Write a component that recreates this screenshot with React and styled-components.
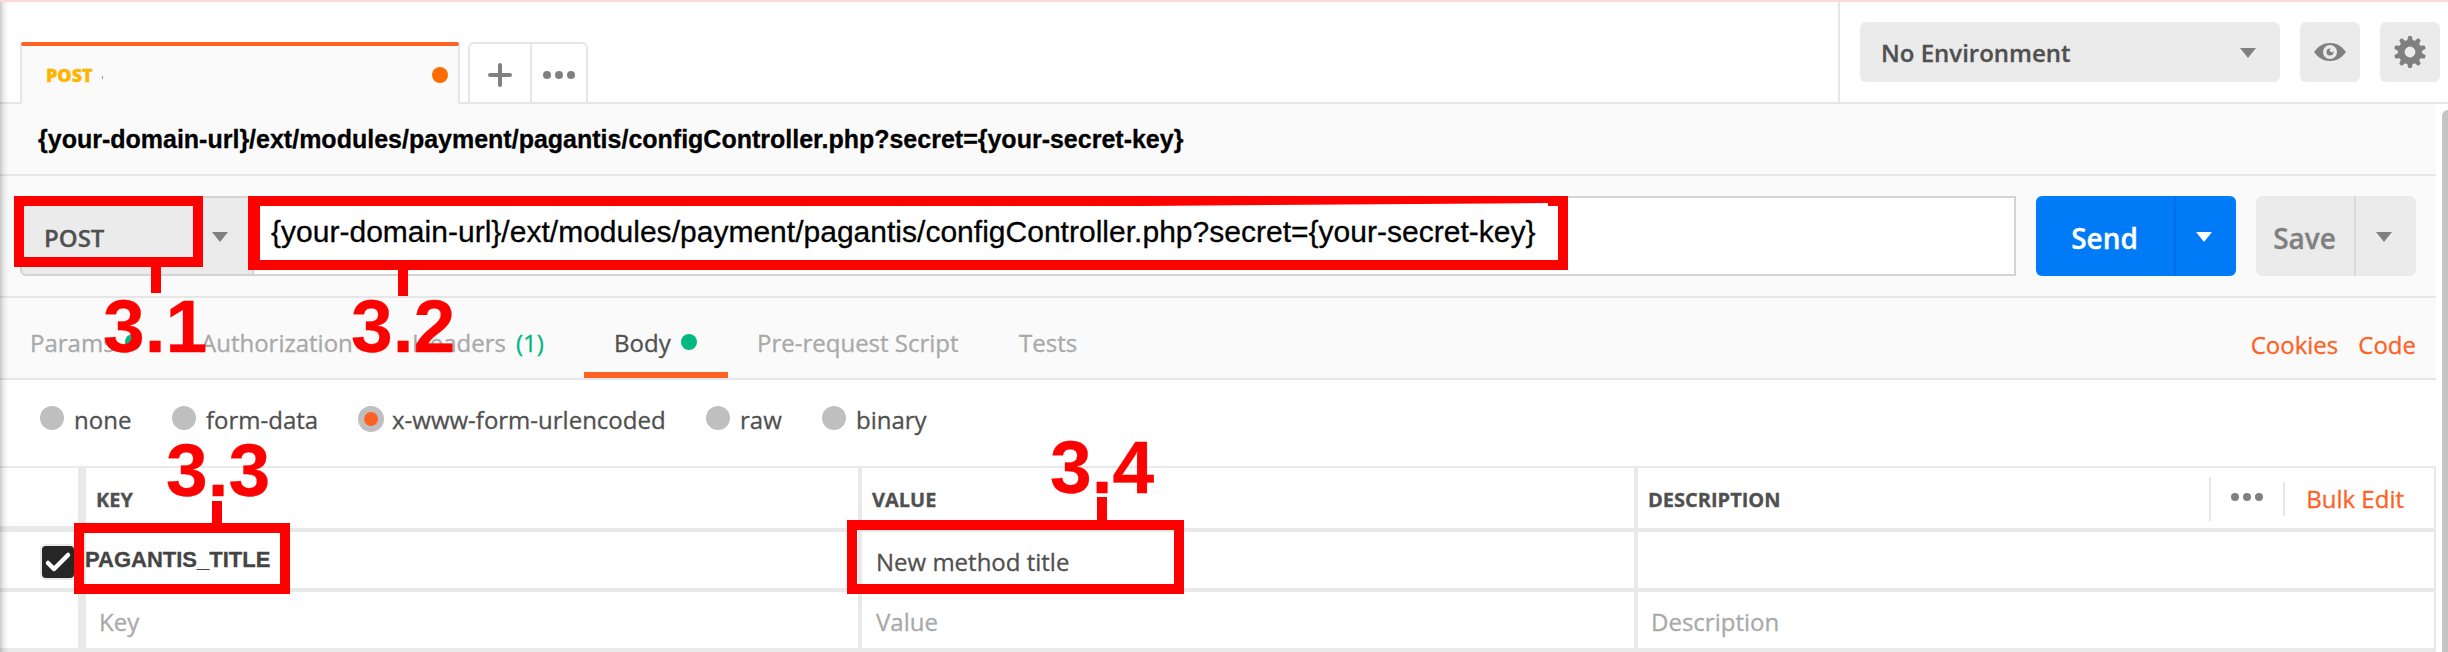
import React from "react";
import styled, { createGlobalStyle } from "styled-components";

const GlobalStyle = createGlobalStyle`
  * { box-sizing: border-box; }
  body { margin: 0; background: #fff; overflow: hidden; }
`;

const sans = `"Open Sans", "Noto Sans", sans-serif`;
const helv = `"Liberation Sans", Arial, sans-serif`;

const Window = styled.div`
  position: relative;
  width: 2448px;
  height: 652px;
  overflow: hidden;
  display: flex;
  flex-direction: column;
  border-top: 2px solid #ffd9d9;
  background: #fff;
  font-family: ${sans};
  font-size: 24px;
  color: #505050;
  white-space: nowrap;
  -webkit-text-stroke: 0.3px currentColor;
`;

const LeftShade = styled.div`
  position: absolute;
  left: 0;
  top: 0;
  width: 9px;
  height: 650px;
  background: linear-gradient(to right, rgba(0, 0, 0, 0.2), rgba(0, 0, 0, 0.06) 45%, rgba(0, 0, 0, 0));
`;

const Label = styled.span`
  display: block;
`;

/* ---- top bar ---- */
const TopBar = styled.header`
  display: flex;
  height: 102px;
  flex: none;
`;
const TabStrip = styled.div`
  display: flex;
  align-items: flex-end;
  width: 1838px;
`;
const StripLine = styled.div`
  height: 2px;
  background: #e6e6e6;
  flex: ${(p) => (p.$width ? `0 0 ${p.$width}px` : "1")};
`;
const ActiveTab = styled.div`
  display: flex;
  align-items: center;
  width: 440px;
  height: 62px;
  padding: 0 10px 0 24px;
  border: 2px solid #e6e6e6;
  border-top: 4px solid #ff6024;
  border-bottom: 0;
  border-radius: 4px 4px 0 0;
  background: #fafafa;
  font-size: 18px;
  font-weight: 800;
  color: #ffb400;
`;
const TabName = styled.span`
  width: 1px;
  height: 3px;
  margin: 5px auto 0 9px;
  background: #999;
`;
const Dot = styled.i`
  flex: none;
  width: ${(p) => p.$size || 16}px;
  height: ${(p) => p.$size || 16}px;
  border-radius: 50%;
  background: ${(p) => p.$color};
`;
const TabTools = styled.div`
  display: flex;
  width: 120px;
  height: 62px;
  border: 2px solid #e6e6e6;
  border-radius: 6px 6px 0 0;
`;
const TabTool = styled.button`
  display: flex;
  align-items: center;
  justify-content: center;
  width: ${(p) => p.$width}px;
  padding: 4px 0 0;
  border: 0;
  border-right: ${(p) => (p.$divided ? "2px solid #e6e6e6" : "0")};
  background: none;
`;
const EnvBar = styled.div`
  display: flex;
  flex: 1;
  gap: 20px;
  padding: 20px 0 0 20px;
  border-left: 2px solid #e6e6e6;
  border-bottom: 2px solid #e6e6e6;
`;
const EnvSelect = styled.div`
  display: flex;
  align-items: center;
  justify-content: space-between;
  width: 420px;
  height: 60px;
  padding: 1px 24px 0 21px;
  border-radius: 6px;
  background: #ebebeb;
  font-weight: 600;
`;
const IconButton = styled.button`
  display: flex;
  align-items: center;
  justify-content: center;
  width: 60px;
  height: 60px;
  padding: 0 0 ${(p) => p.$lift || 0}px;
  border: 0;
  border-radius: 6px;
  background: #ebebeb;
`;

/* ---- request area ---- */
const Main = styled.main`
  display: flex;
  flex: 1;
  min-height: 0;
`;
const Pane = styled.div`
  display: flex;
  flex-direction: column;
  width: 2436px;
  background: #fafafa;
`;
const ScrollTrack = styled.div`
  flex: 1;
  padding: 6px 0 0 6px;
`;
const ScrollThumb = styled.div`
  height: 600px;
  border-radius: 6px 0 0 0;
  background: #c4c4c4;
`;
const TitleRow = styled.div`
  height: 72px;
  padding-left: 38px;
  border-bottom: 2px solid #e6e6e6;
  font: 700 25px/70px ${helv};
  color: #000;
`;
const RequestRow = styled.div`
  display: flex;
  height: 122px;
  padding: 20px;
  border-bottom: 2px solid #e6e6e6;
`;
const MethodSelect = styled.div`
  display: flex;
  align-items: center;
  justify-content: space-between;
  width: 234px;
  padding: 2px 24px 0 22px;
  border: 2px solid #d3d3d3;
  border-radius: 6px 0 0 6px;
  background: #ebebeb;
  font-weight: 600;
`;
const UrlInput = styled.div`
  width: 1762px;
  padding-left: 17px;
  border: 2px solid #d3d3d3;
  border-left: 0;
  background: #fff;
  font: 400 30px/67px ${helv};
  letter-spacing: 0.015px;
  color: #000;
`;
const SplitButton = styled.div`
  display: flex;
  width: ${(p) => p.$width}px;
  margin-left: 20px;
  border-radius: 6px;
  background: ${(p) => (p.$primary ? "#007bf7" : "#ebebeb")};
  color: ${(p) => (p.$primary ? "#fff" : "#808080")};
  font-size: 28px;
  font-weight: 600;
`;
const SplitMain = styled.div`
  display: flex;
  align-items: center;
  justify-content: center;
  flex: 1;
  padding: 3px 1px 0 0;
`;
const SplitMenu = styled.div`
  display: flex;
  align-items: center;
  justify-content: center;
  width: 62px;
  padding: 2px 4px 0 0;
  border-left: 2px solid ${(p) => (p.$primary ? "#0070e4" : "#d9d9d9")};
`;
const SectionTabs = styled.nav`
  display: flex;
  height: 82px;
  padding-right: 20px;
  border-bottom: 2px solid #e6e6e6;
  color: #a9a9a9;
`;
const SectionTab = styled.div`
  display: flex;
  align-items: center;
  gap: 10px;
  width: ${(p) => p.$width}px;
  padding: ${(p) => (p.$active ? "14px 0 0" : "14px 0 6px")};
  padding-left: ${(p) => p.$inset}px;
  border-bottom: ${(p) => (p.$active ? "6px solid #ff6024" : "0")};
  color: ${(p) => (p.$active ? "#505050" : "inherit")};
`;
const Count = styled.span`
  color: #00b880;
`;
const SectionLinks = styled.div`
  display: flex;
  align-items: center;
  gap: 20px;
  height: 80px;
  margin-left: auto;
  padding-top: 12px;
  color: #ff6024;
`;
const BodyTypes = styled.div`
  display: flex;
  height: 86px;
  padding-left: 40px;
  background: #fff;
`;
const BodyType = styled.label`
  display: flex;
  align-items: flex-start;
  gap: ${(p) => p.$gap || 10}px;
  width: ${(p) => p.$width}px;
  padding-top: 26px;
  line-height: 27px;
`;
const Radio = styled.i`
  display: flex;
  align-items: center;
  justify-content: center;
  flex: none;
  width: ${(p) => (p.$on ? 26 : 24)}px;
  height: ${(p) => (p.$on ? 26 : 24)}px;
  border-radius: 50%;
  background: #bfbfbf;
`;

/* ---- parameter table ---- */
const Table = styled.div`
  display: flex;
  flex-direction: column;
  border-top: 2px solid #e9e9e9;
  border-right: 2px solid #e9e9e9;
  background: #fff;
`;
const Row = styled.div`
  display: grid;
  grid-template-columns: 86px 776px 776px 1fr;
  height: ${(p) => (p.$head ? 64 : 60)}px;
  border-bottom: 4px solid #e9e9e9;
  font-size: ${(p) => (p.$head ? 20 : 24)}px;
  font-weight: ${(p) => (p.$head ? 700 : 400)};
  color: ${(p) => (p.$muted ? "#a9a9a9" : "#505050")};
`;
const Cell = styled.div`
  display: flex;
  align-items: center;
  padding: 2px 0 0 ${(p) => p.$inset || 0}px;
  border-right: ${(p) => p.$rule || 0}px solid #e9e9e9;
`;
const CornerCell = styled(Cell)`
  border-bottom: 2px solid #e9e9e9;
`;
const KeyName = styled.span`
  margin-left: -1px;
  padding-bottom: 2px;
  font: 700 22px/30px ${helv};
  color: #444;
`;
const Checkbox = styled.span`
  display: flex;
  width: 32px;
  height: 32px;
  margin: 2px 0 0 42px;
  border-radius: 4px;
  background: #262626;
  box-shadow: 0 0 0 2px #e9e9e9;
`;
const HeadTools = styled.div`
  display: flex;
  align-items: center;
  margin-left: auto;
  padding-right: 30px;
  font-size: 24px;
  font-weight: 400;
  color: #ff6024;
`;
const HeadMore = styled.div`
  display: flex;
  align-items: center;
  justify-content: center;
  width: 74px;
  height: 44px;
  padding-bottom: 4px;
  border-left: 2px solid #e6e6e6;
`;
const BulkEdit = styled.div`
  height: 34px;
  padding-left: 21px;
  border-left: 2px solid #e6e6e6;
  line-height: 34px;
`;

/* ---- callouts drawn over the window ---- */
const Callout = styled.div`
  position: absolute;
  left: ${(p) => p.$x}px;
  top: ${(p) => p.$y - 2}px;
  width: ${(p) => p.$w}px;
  height: ${(p) => p.$h}px;
  border: 10px solid #f00;
  border-left-width: ${(p) => p.$left || 10}px;
`;
const Notch = styled.div`
  position: absolute;
  left: 1142px;
  top: 201px;
  width: 406px;
  height: 3px;
  background: #fff;
  clip-path: polygon(0 100%, 100% 0, 100% 100%);
`;
const Stem = styled.div`
  position: absolute;
  left: ${(p) => p.$x}px;
  top: ${(p) => p.$y - 2}px;
  width: 10px;
  height: ${(p) => p.$h}px;
  background: #f00;
`;
const Step = styled.div`
  position: absolute;
  left: ${(p) => p.$x}px;
  top: ${(p) => p.$base - 68}px;
  font: 700 75px/80px ${helv};
  color: #f00;
`;

const Caret = ({ color = "#808080" }) => (
  <svg width="16" height="10" viewBox="0 0 16 10">
    <path d="M0 0H16L8 10Z" fill={color} />
  </svg>
);
const More = () => (
  <svg width="32" height="8" viewBox="0 0 32 8" fill="#808080">
    <circle cx="4" cy="4" r="4" />
    <circle cx="16" cy="4" r="4" />
    <circle cx="28" cy="4" r="4" />
  </svg>
);
const Plus = () => (
  <svg width="24" height="24" viewBox="0 0 24 24" stroke="#808080" strokeWidth="4" strokeLinecap="round">
    <path d="M12 2V22M2 12H22" />
  </svg>
);
const Eye = () => (
  <svg width="32" height="18" viewBox="0 0 32 18">
    <path d="M0 9C4.5 3 9.5 0 16 0S27.500 3 32 9C27.500 15 22.500 18 16 18S4.500 15 0 9Z" fill="#808080" />
    <circle cx="16" cy="9" r="7" fill="#ebebeb" />
    <circle cx="16" cy="9" r="3.500" fill="#808080" />
    <circle cx="17.800" cy="7.200" r="2" fill="#ebebeb" />
  </svg>
);
const teeth = [0, 36, 72, 108, 144, 180, 216, 252, 288, 324];
const Gear = () => (
  <svg width="32" height="32" viewBox="-16 -16 32 32" fill="#808080">
    {teeth.map((a) => (
      <path key={a} d="M-3 -10L-2 -15Q-1.800 -16 -1 -16H1Q1.800 -16 2 -15L3 -10Z" transform={`rotate(${a})`} />
    ))}
    <circle r="8.800" fill="none" stroke="#808080" strokeWidth="6.800" />
  </svg>
);
const Check = () => (
  <svg width="32" height="32" viewBox="0 0 32 32" fill="none" stroke="#fff" strokeWidth="4.500" strokeLinecap="round" strokeLinejoin="round">
    <path d="M6 17L12 23L26 9" />
  </svg>
);

const endpoint =
  "{your-domain-url}/ext/modules/payment/pagantis/configController.php?secret={your-secret-key}";

export default function App() {
  return (
    <>
      <GlobalStyle />
      <Window>
        <TopBar>
          <TabStrip>
            <StripLine $width={20} />
            <ActiveTab>
              <Label>POST</Label>
              <TabName />
              <Dot $color="#ff6c00" />
            </ActiveTab>
            <StripLine $width={8} />
            <TabTools>
              <TabTool $width={62} $divided><Plus /></TabTool>
              <TabTool $width={54}><More /></TabTool>
            </TabTools>
            <StripLine />
          </TabStrip>
          <EnvBar>
            <EnvSelect>
              <Label>No Environment</Label>
              <Caret />
            </EnvSelect>
            <IconButton><Eye /></IconButton>
            <IconButton><Gear /></IconButton>
          </EnvBar>
        </TopBar>
        <Main>
          <Pane>
            <TitleRow>{endpoint}</TitleRow>
            <RequestRow>
              <MethodSelect>
                <Label>POST</Label>
                <Caret />
              </MethodSelect>
              <UrlInput>{endpoint}</UrlInput>
              <SplitButton $primary $width={200}>
                <SplitMain><Label>Send</Label></SplitMain>
                <SplitMenu $primary><Caret color="#fff" /></SplitMenu>
              </SplitButton>
              <SplitButton $width={160}>
                <SplitMain><Label>Save</Label></SplitMain>
                <SplitMenu><Caret /></SplitMenu>
              </SplitButton>
            </RequestRow>
            <SectionTabs>
              <SectionTab $width={170} $inset={30}><Label>Params</Label><Dot $color="#00b880" /></SectionTab>
              <SectionTab $width={212} $inset={31}><Label>Authorization</Label></SectionTab>
              <SectionTab $width={202} $inset={30}><Label>Headers</Label><Count>(1)</Count></SectionTab>
              <SectionTab $width={144} $inset={30} $active><Label>Body</Label><Dot $color="#00b880" /></SectionTab>
              <SectionTab $width={261} $inset={29}><Label>Pre-request Script</Label></SectionTab>
              <SectionTab $width={120} $inset={30}><Label>Tests</Label></SectionTab>
              <SectionLinks><span>Cookies</span><span>Code</span></SectionLinks>
            </SectionTabs>
            <BodyTypes>
              <BodyType $width={132}><Radio />none</BodyType>
              <BodyType $width={186}><Radio />form-data</BodyType>
              <BodyType $width={348} $gap={8}><Radio $on><Dot $size={14} $color="#ff6024" /></Radio>x-www-form-urlencoded</BodyType>
              <BodyType $width={116}><Radio />raw</BodyType>
              <BodyType $width={140}><Radio />binary</BodyType>
            </BodyTypes>
            <Table>
              <Row $head>
                <CornerCell $rule={8} />
                <Cell $rule={4} $inset={10}>KEY</Cell>
                <Cell $rule={4} $inset={10}>VALUE</Cell>
                <Cell $inset={10}>
                  DESCRIPTION
                  <HeadTools>
                    <HeadMore><More /></HeadMore>
                    <BulkEdit>Bulk Edit</BulkEdit>
                  </HeadTools>
                </Cell>
              </Row>
              <Row>
                <Cell $rule={8}><Checkbox><Check /></Checkbox></Cell>
                <Cell $rule={4}><KeyName>PAGANTIS_TITLE</KeyName></Cell>
                <Cell $rule={4} $inset={14}>New method title</Cell>
                <Cell />
              </Row>
              <Row $muted>
                <Cell $rule={8} />
                <Cell $rule={4} $inset={13}>Key</Cell>
                <Cell $rule={4} $inset={14}>Value</Cell>
                <Cell $inset={13}>Description</Cell>
              </Row>
            </Table>
          </Pane>
          <ScrollTrack><ScrollThumb /></ScrollTrack>
        </Main>
        <LeftShade />
        <Callout $x={14} $y={196} $w={189} $h={71} />
        <Callout $x={248} $y={196} $w={1320} $h={74} $left={12} />
        <Notch />
        <Callout $x={74} $y={523} $w={216} $h={71} />
        <Callout $x={847} $y={520} $w={337} $h={74} />
        <Stem $x={151} $y={266} $h={27} />
        <Stem $x={398} $y={269} $h={27} />
        <Stem $x={212} $y={501} $h={30} />
        <Stem $x={1097} $y={497} $h={30} />
        <Step $x={103} $base={352}>3.1</Step>
        <Step $x={351} $base={352}>3.2</Step>
        <Step $x={166} $base={496}>3.3</Step>
        <Step $x={1050} $base={493}>3.4</Step>
      </Window>
    </>
  );
}
